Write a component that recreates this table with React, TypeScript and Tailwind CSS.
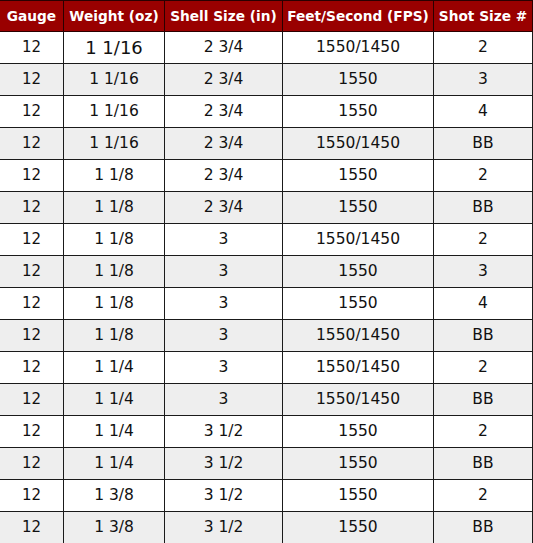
import React from 'react';

const rows: [string, string, string, string, string][] = [
    ['12', '1 1/16', '2 3/4', '1550/1450', '2'],
    ['12', '1 1/16', '2 3/4', '1550', '3'],
    ['12', '1 1/16', '2 3/4', '1550', '4'],
    ['12', '1 1/16', '2 3/4', '1550/1450', 'BB'],
    ['12', '1 1/8', '2 3/4', '1550', '2'],
    ['12', '1 1/8', '2 3/4', '1550', 'BB'],
    ['12', '1 1/8', '3', '1550/1450', '2'],
    ['12', '1 1/8', '3', '1550', '3'],
    ['12', '1 1/8', '3', '1550', '4'],
    ['12', '1 1/8', '3', '1550/1450', 'BB'],
    ['12', '1 1/4', '3', '1550/1450', '2'],
    ['12', '1 1/4', '3', '1550/1450', 'BB'],
    ['12', '1 1/4', '3 1/2', '1550', '2'],
    ['12', '1 1/4', '3 1/2', '1550', 'BB'],
    ['12', '1 3/8', '3 1/2', '1550', '2'],
    ['12', '1 3/8', '3 1/2', '1550', 'BB'],
];

const headers = ['Gauge', 'Weight (oz)', 'Shell Size (in)', 'Feet/Second (FPS)', 'Shot Size #'];

const App: React.FC = () => {
    return (
        <div className="w-[533px] h-[543px] overflow-hidden bg-white">
            <table className="-ml-px w-[533px] table-fixed border-collapse font-['DejaVu_Sans',sans-serif] text-[#111]">
                <colgroup>
                    <col className="w-[64px]" />
                    <col className="w-[101px]" />
                    <col className="w-[118px]" />
                    <col className="w-[151px]" />
                    <col className="w-[99px]" />
                </colgroup>
                <thead>
                    <tr className="h-[31px] bg-[#990000]">
                        {headers.map((h) => (
                            <th
                                key={h}
                                className="border border-[#2a0000] p-0 text-center text-[13.7px] font-bold text-white whitespace-nowrap"
                            >
                                {h}
                            </th>
                        ))}
                    </tr>
                </thead>
                <tbody>
                    {rows.map((r, i) => (
                        <tr key={i} className={`h-[32px] ${i % 2 === 1 ? 'bg-[#eeeeee]' : 'bg-white'}`}>
                            {r.map((c, j) => (
                                <td
                                    key={j}
                                    className={`border border-[#1a1a1a] p-0 text-center ${i === 0 && j === 1 ? 'text-[18px]' : j === 0 ? 'text-[15px]' : 'text-[15.5px]'}`}
                                >
                                    {c}
                                </td>
                            ))}
                        </tr>
                    ))}
                </tbody>
            </table>
        </div>
    );
};

export default App;
